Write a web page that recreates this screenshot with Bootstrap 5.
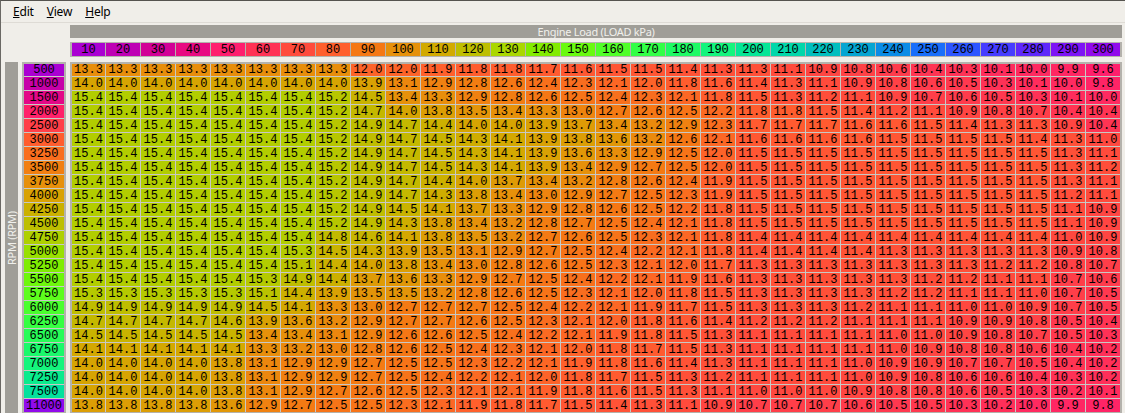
<!doctype html>
<html lang="en">
<head>
<meta charset="utf-8">
<title>Table editor</title>
<link href="https://cdn.jsdelivr.net/npm/bootstrap@5.3.0/dist/css/bootstrap.min.css" rel="stylesheet">
<style>
html,body{height:413px;overflow:hidden;background:#f0eee9}
.app-win{height:413px;border-top:1px solid #55534f;border-left:1px solid #6a6864;background:#f0eee9;color:#000}
.menu-bar{height:22px;border-bottom:1px solid #dedbd5;font:12px/16px "Noto Sans",sans-serif;padding:3px 0 0 12px;gap:13px;letter-spacing:-.2px}
.body-area{padding:2px 3px 0 4px}
.y-title{width:13px;margin-top:37px;background:#a09e98;color:#f0f0ec;font:11px "Noto Sans",sans-serif;letter-spacing:-.3px;writing-mode:vertical-rl;transform:rotate(180deg)}
.rpm-wrap{margin-left:4px;width:44px;margin-top:37px;background:#b4b2ac;padding:2px 2px 0 2px;flex:none}
.main-col{margin-left:4px;width:1052px;flex:none}
.x-title{height:13px;background:#a09e98;color:#f0f0ec;font:11px/13px "Noto Sans",sans-serif;letter-spacing:-.3px}
.x-wrap{margin-top:4px;background:#b4b2ac;padding:1px 2px 1px 2px}
.map-wrap{margin-top:5px;background:#b4b2ac;padding:2px 2px 2px 2px;height:352px}
.x-grid,.map-grid{display:grid;gap:1px;grid-template-columns:33px repeat(29,34px)}
.x-grid{grid-template-rows:13px}
.map-grid{background:#c8c8c4;grid-template-rows:12px repeat(24,13px)}
.rpm-grid{display:grid;gap:1px;background:#c8c8c4;grid-template-rows:12px repeat(24,13px)}
.tcell{font:12px/12px "Liberation Mono",monospace;color:#000;display:flex;align-items:center;justify-content:center;white-space:pre}
</style>
</head>
<body>
<div class="app-win d-flex flex-column overflow-hidden">
  <nav class="menu-bar d-flex flex-shrink-0">
    <span><u>E</u>dit</span><span><u>V</u>iew</span><span><u>H</u>elp</span>
  </nav>
  <div class="body-area d-flex flex-grow-1">
    <div class="y-title d-flex align-items-center justify-content-center flex-shrink-0">RPM (RPM)</div>
    <div class="rpm-wrap"><div class="rpm-grid" id="rpm"></div></div>
    <div class="main-col">
      <div class="x-title text-center">Engine Load (LOAD kPa)</div>
      <div class="x-wrap"><div class="x-grid" id="xaxis"></div></div>
      <div class="map-wrap"><div class="map-grid" id="map"></div></div>
    </div>
  </div>
</div>
<script>
var P=[[170,0,210],[190,0,180],[210,0,150],[232,10,130],[255,30,110],[255,50,85],[255,75,60],[255,95,45],[245,120,20],[230,145,10],[210,170,0],[190,190,0],[170,215,0],[130,235,0],[105,250,15],[80,255,40],[50,255,70],[30,250,100],[20,245,125],[5,230,150],[0,215,170],[0,190,190],[5,165,210],[10,140,230],[25,110,250],[45,85,255],[70,60,255],[95,40,250],[125,20,245],[145,10,235]];
function col(f){var x=Math.max(0,Math.min(1,f))*29,i=Math.min(28,Math.floor(x)),t=x-i,a=P[i],b=P[i+1];
  return 'rgb('+[0,1,2].map(function(k){return Math.round(a[k]+(b[k]-a[k])*t)}).join(',')+')';}
function rep(v,n){var r=[];for(var i=0;i<n;i++)r.push(v);return r}
var R=[500,1000,1500,2000,2500,3000,3250,3500,3750,4000,4250,4500,4750,5000,5250,5500,5750,6000,6250,6500,6750,7000,7250,7500,11000];
var L=[rep(13.3,8),rep(14.0,8),rep(15.4,7).concat(15.2),rep(15.4,7).concat(15.2),rep(15.4,7).concat(15.2),rep(15.4,7).concat(15.2),
rep(15.4,7).concat(15.2),rep(15.4,7).concat(15.2),rep(15.4,7).concat(15.2),rep(15.4,7).concat(15.2),rep(15.4,7).concat(15.2),rep(15.4,7).concat(15.2),
rep(15.4,7).concat(14.8),rep(15.4,6).concat(15.3,14.5),rep(15.4,6).concat(15.1,14.4),rep(15.4,5).concat(15.3,14.9,14.4),rep(15.3,5).concat(15.1,14.4,13.9),
rep(14.9,5).concat(14.5,14.1,13.3),rep(14.7,4).concat(14.6,13.9,13.6,13.2),rep(14.5,5).concat(13.4,13.4,13.1),rep(14.1,5).concat(13.3,13.2,13.0),
rep(14.0,4).concat(13.8,13.1,12.9,12.9),rep(14.0,4).concat(13.8,13.1,12.9,12.9),rep(14.0,4).concat(13.8,13.1,12.9,12.7),rep(13.8,4).concat(13.6,12.9,12.7,12.5)];
var M=[
[12.0,12.0,11.9,11.8,11.8,11.7,11.6,11.5,11.5,11.4,11.3,11.3,11.1,10.9,10.8,10.6,10.4,10.3,10.1,10.0,9.9,9.6],
[13.9,13.1,12.9,12.8,12.6,12.4,12.3,12.1,12.0,11.8,11.6,11.4,11.3,11.1,10.9,10.8,10.6,10.5,10.3,10.1,10.0,9.8],
[14.5,13.4,13.3,12.9,12.8,12.6,12.5,12.4,12.3,12.1,11.8,11.5,11.3,11.2,11.1,10.9,10.7,10.6,10.5,10.3,10.1,10.0],
[14.7,14.0,13.8,13.5,13.4,13.3,13.0,12.7,12.6,12.5,12.2,11.8,11.8,11.5,11.4,11.2,11.1,10.9,10.8,10.7,10.4,10.4],
[14.9,14.7,14.4,14.0,14.0,13.9,13.7,13.4,13.2,12.9,12.3,11.7,11.7,11.7,11.6,11.6,11.5,11.4,11.3,11.3,10.9,10.4],
[14.9,14.7,14.5,14.3,14.1,13.9,13.8,13.6,13.2,12.6,12.1,11.6,11.6,11.6,11.6,11.5,11.5,11.5,11.5,11.4,11.3,11.0],
[14.9,14.7,14.5,14.3,14.1,13.9,13.6,13.3,12.9,12.5,12.0,11.5,11.5,11.5,11.5,11.5,11.5,11.5,11.5,11.5,11.3,11.1],
[14.9,14.7,14.5,14.3,14.1,13.9,13.4,12.9,12.7,12.5,12.0,11.5,11.5,11.5,11.5,11.5,11.5,11.5,11.5,11.5,11.3,11.2],
[14.9,14.7,14.4,14.0,13.7,13.4,13.2,12.8,12.6,12.4,11.9,11.5,11.5,11.5,11.5,11.5,11.5,11.5,11.5,11.5,11.3,11.1],
[14.9,14.7,14.3,13.8,13.4,13.0,12.9,12.7,12.5,12.3,11.9,11.5,11.5,11.5,11.5,11.5,11.5,11.5,11.5,11.5,11.2,11.1],
[14.9,14.5,14.1,13.7,13.3,12.9,12.8,12.6,12.5,12.2,11.8,11.5,11.5,11.5,11.5,11.5,11.5,11.5,11.5,11.5,11.1,10.9],
[14.9,14.3,13.8,13.4,13.2,12.8,12.7,12.5,12.4,12.1,11.8,11.5,11.5,11.5,11.5,11.5,11.5,11.5,11.5,11.5,11.1,10.9],
[14.6,14.1,13.8,13.5,13.2,12.7,12.6,12.5,12.3,12.1,11.8,11.4,11.4,11.4,11.4,11.4,11.4,11.4,11.4,11.4,11.0,10.9],
[14.3,13.9,13.5,13.1,12.9,12.7,12.5,12.4,12.2,12.1,11.8,11.4,11.4,11.4,11.4,11.3,11.3,11.3,11.3,11.3,10.9,10.8],
[14.0,13.8,13.4,13.0,12.8,12.6,12.5,12.3,12.1,12.0,11.7,11.3,11.3,11.3,11.3,11.3,11.3,11.3,11.2,11.2,10.8,10.7],
[13.7,13.6,13.3,12.9,12.7,12.5,12.4,12.2,12.1,11.9,11.6,11.3,11.3,11.3,11.3,11.3,11.2,11.2,11.1,11.1,10.7,10.6],
[13.5,13.5,13.2,12.8,12.6,12.5,12.3,12.1,12.0,11.8,11.5,11.3,11.3,11.3,11.3,11.2,11.2,11.1,11.1,11.0,10.7,10.5],
[13.0,12.7,12.7,12.7,12.5,12.4,12.2,12.1,11.9,11.7,11.5,11.3,11.3,11.3,11.2,11.1,11.1,11.0,11.0,10.9,10.7,10.5],
[12.9,12.7,12.7,12.6,12.5,12.3,12.1,12.0,11.8,11.6,11.4,11.2,11.2,11.2,11.1,11.1,11.1,10.9,10.9,10.8,10.5,10.4],
[12.9,12.6,12.6,12.5,12.4,12.2,12.1,11.9,11.8,11.5,11.3,11.1,11.1,11.1,11.1,11.0,11.0,10.9,10.8,10.7,10.5,10.3],
[12.8,12.6,12.5,12.4,12.3,12.1,12.0,11.8,11.7,11.5,11.3,11.1,11.1,11.1,11.1,11.0,10.9,10.8,10.8,10.6,10.4,10.2],
[12.7,12.5,12.5,12.3,12.2,12.1,11.9,11.8,11.6,11.4,11.3,11.1,11.1,11.1,11.0,10.9,10.9,10.7,10.7,10.5,10.4,10.2],
[12.7,12.5,12.4,12.2,12.1,12.0,11.8,11.7,11.5,11.3,11.2,11.1,11.1,11.1,11.0,10.9,10.8,10.6,10.6,10.4,10.3,10.2],
[12.6,12.5,12.3,12.1,12.1,11.9,11.8,11.6,11.5,11.3,11.1,11.0,11.0,11.0,10.9,10.8,10.8,10.6,10.5,10.3,10.2,10.1],
[12.5,12.3,12.1,11.9,11.8,11.7,11.5,11.4,11.3,11.1,10.9,10.7,10.7,10.7,10.6,10.5,10.5,10.3,10.2,10.0,9.9,9.8]];
function cell(t,bg){var d=document.createElement('div');d.className='tcell';d.textContent=t;d.style.background=bg;return d}
var X=document.getElementById('xaxis');
for(var c=1;c<=30;c++)X.appendChild(cell(String(c*10),col((c-1)/29)));
var Y=document.getElementById('rpm');
R.forEach(function(r){Y.appendChild(cell(String(r),col((r-500)/10500)))});
var G=document.getElementById('map');
function vf(v){return .14+(v-9.6)*.0448}
L.forEach(function(l,i){l.concat(M[i]).forEach(function(v){G.appendChild(cell(v.toFixed(1),col(vf(v))))})});
</script>
<script src="https://cdn.jsdelivr.net/npm/bootstrap@5.3.0/dist/js/bootstrap.bundle.min.js"></script>
</body>
</html>
